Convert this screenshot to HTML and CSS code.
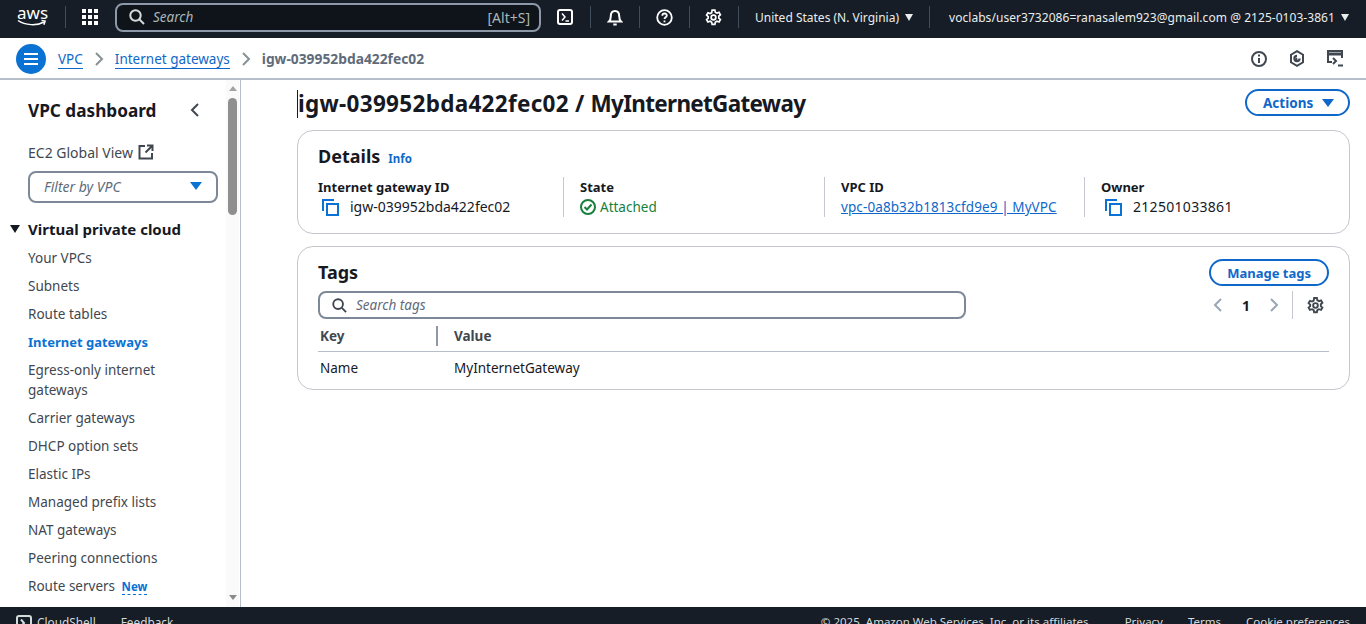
FILE: index.html
```html
<!DOCTYPE html>
<html lang="en">
<head>
  <meta charset="UTF-8">
  <meta name="viewport" content="width=device-width, initial-scale=1.0">
  <title>igw-039952bda422fec02 | VPC Console</title>
  <link rel="stylesheet" href="styles.css">
</head>
<body>
  <header class="topbar">
    <div class="aws-logo">
      <span class="aws-word">aws</span>
      <svg class="aws-smile" width="30" height="8" viewBox="0 0 30 8"><path d="M1 1.500C8 6.500 20 7 27 3M24.500 1.600l3.600.6-1.200 3.500" fill="none" stroke="#fff" stroke-width="1.500"/></svg>
    </div>
    <span class="top-sep"></span>
    <svg class="grid-icon" width="16" height="16" viewBox="0 0 16 16" fill="#fff"><rect x="0" y="0" width="4" height="4"/><rect x="6" y="0" width="4" height="4"/><rect x="12" y="0" width="4" height="4"/><rect x="0" y="6" width="4" height="4"/><rect x="6" y="6" width="4" height="4"/><rect x="12" y="6" width="4" height="4"/><rect x="0" y="12" width="4" height="4"/><rect x="6" y="12" width="4" height="4"/><rect x="12" y="12" width="4" height="4"/></svg>
    <div class="top-search">
      <svg width="16" height="16" viewBox="0 0 16 16" fill="none" stroke="#d5dbdb" stroke-width="2"><circle cx="6.500" cy="6.500" r="5.200"/><path d="M10.500 10.500L15 15"/></svg>
      <span class="top-search-text">Search</span>
      <span class="top-search-key">[Alt+S]</span>
    </div>
    <div class="top-icon">
      <svg width="16" height="16" viewBox="0 0 16 16" fill="none" stroke="#fff" stroke-width="2"><rect x="1" y="1" width="14" height="14" rx="2"/><path d="M5 4.500L8 8l-3 3.500M8.500 12H12" stroke-width="1.500"/></svg>
    </div>
    <div class="top-icon">
      <svg width="16" height="17" viewBox="0 0 16 17" fill="none" stroke="#fff" stroke-width="2"><path d="M2 12.500c1.500-1.500 1.800-3 1.800-5.500C3.800 4 5.500 2 8 2s4.200 2 4.200 5c0 2.500.3 4 1.800 5.500z"/><path d="M6.300 15.500h3.400"/></svg>
    </div>
    <div class="top-icon">
      <svg width="17" height="17" viewBox="0 0 17 17" fill="none" stroke="#fff" stroke-width="1.800"><circle cx="8.500" cy="8.500" r="7.300"/><path d="M6.300 6.800c0-3 4.500-3 4.500-.3 0 1.800-2.300 1.800-2.300 3.600"/><path d="M8.500 11.500v1.800"/></svg>
    </div>
    <div class="top-icon">
      <svg width="17" height="17" viewBox="0 0 16 16" fill="none" stroke="#fff" stroke-width="1.600"><path d="M6.700 1h2.600l.4 2 1.500.9 2-.7 1.300 2.200-1.500 1.400v1.800l1.500 1.400-1.300 2.200-2-.7-1.500.9-.4 2H6.700l-.4-2-1.500-.9-2 .7-1.300-2.200 1.500-1.400V7.200L1.500 5.800l1.300-2.200 2 .7 1.500-.9z"/><circle cx="8" cy="8" r="2.200"/></svg>
    </div>
    <div class="top-menu region">United States (N. Virginia)<span class="mini-caret"></span></div>
    <div class="top-menu account">voclabs/user3732086=ranasalem923@gmail.com @ 2125-0103-3861<span class="mini-caret"></span></div>
  </header>

  <nav class="crumbs">
    <button class="menu-btn" aria-label="Menu">
      <svg width="14" height="12" viewBox="0 0 14 12" stroke="#fff" stroke-width="2"><path d="M0 1h14M0 6h14M0 11h14"/></svg>
    </button>
    <a class="crumb" href="#">VPC</a>
    <svg class="crumb-arrow" width="9" height="14" viewBox="0 0 9 14" fill="none" stroke="#879196" stroke-width="2"><path d="M1 1l6 6-6 6"/></svg>
    <a class="crumb" href="#">Internet gateways</a>
    <svg class="crumb-arrow" width="9" height="14" viewBox="0 0 9 14" fill="none" stroke="#879196" stroke-width="2"><path d="M1 1l6 6-6 6"/></svg>
    <span class="crumb-current">igw-039952bda422fec02</span>
    <div class="crumb-tools">
      <svg width="16" height="16" viewBox="0 0 16 16" fill="none" stroke="#414750" stroke-width="2"><circle cx="8" cy="8" r="7"/><path d="M8 7v5M8 3.500v2"/></svg>
      <svg width="16" height="17" viewBox="0 0 16 17" fill="none" stroke="#414750" stroke-width="2"><path d="M8 1.200l6 3.500v7.600l-6 3.500-6-3.500V4.700z"/><path d="M10.600 8.500A2.600 2.600 0 1 1 8 5.900" stroke-width="2.200"/><path d="M6.500 8.500L8 10" stroke-width="2.500"/></svg>
      <svg width="17" height="17" viewBox="0 0 17 17" fill="none" stroke="#414750" stroke-width="2"><path d="M5 12H1V1h14v7"/><path d="M1 4h14" stroke-width="3"/><path d="M6 8l3 3-3 3M11 15.500h5"/></svg>
    </div>
  </nav>

  <div class="page">
    <aside class="sidebar">
      <div class="side-scroll">
        <div class="side-head">
          <h2>VPC dashboard</h2>
          <svg width="10" height="14" viewBox="0 0 10 14" fill="none" stroke="#414750" stroke-width="2"><path d="M8 1L2 7l6 6"/></svg>
        </div>
        <div class="side-global">EC2 Global View
          <svg width="16" height="16" viewBox="0 0 16 16" fill="none" stroke="#414750" stroke-width="2"><path d="M7 2H1.500v12.500H14V9"/><path d="M9 1.500h5.500V7M14 2L7.500 8.500"/></svg>
        </div>
        <div class="side-filter">
          <span>Filter by VPC</span>
          <span class="filter-caret"></span>
        </div>
        <div class="side-section"><span class="section-caret"></span>Virtual private cloud</div>
        <ul class="side-list">
          <li>Your VPCs</li>
          <li>Subnets</li>
          <li>Route tables</li>
          <li class="active">Internet gateways</li>
          <li class="two-line">Egress-only internet gateways</li>
          <li>Carrier gateways</li>
          <li>DHCP option sets</li>
          <li>Elastic IPs</li>
          <li>Managed prefix lists</li>
          <li>NAT gateways</li>
          <li>Peering connections</li>
          <li>Route servers <span class="badge-new">New</span></li>
        </ul>
      </div>
      <div class="scroll-track">
        <span class="scroll-up"></span>
        <span class="scroll-thumb"></span>
        <span class="scroll-down"></span>
      </div>
    </aside>

    <main class="content">
      <div class="title-row">
        <h1 class="page-title"><span class="title-id">igw-039952bda422fec02 /</span> <span class="title-name">MyInternetGateway</span></h1>
        <button class="btn btn-actions">Actions<span class="blue-caret"></span></button>
      </div>

      <section class="card details">
        <div class="card-title-row">
          <h2>Details</h2>
          <a class="info-link" href="#">Info</a>
        </div>
        <div class="kv-grid">
          <div class="kv">
            <div class="kv-label">Internet gateway ID</div>
            <div class="kv-value copy">
              <svg width="17" height="17" viewBox="0 0 17 17" fill="none" stroke="#0972d3" stroke-width="2"><path d="M1 12V1h11"/><rect x="5" y="5" width="11" height="11"/></svg>
              igw-039952bda422fec02
            </div>
          </div>
          <div class="kv">
            <div class="kv-label">State</div>
            <div class="kv-value state">
              <svg width="16" height="16" viewBox="0 0 16 16" fill="none" stroke="#17803d" stroke-width="2"><circle cx="8" cy="8" r="7"/><path d="M4.500 8l2.500 2.500 4.500-5"/></svg>
              Attached
            </div>
          </div>
          <div class="kv">
            <div class="kv-label">VPC ID</div>
            <div class="kv-value"><a class="vpc-link" href="#">vpc-0a8b32b1813cfd9e9 | MyVPC</a></div>
          </div>
          <div class="kv">
            <div class="kv-label">Owner</div>
            <div class="kv-value copy owner-id">
              <svg width="17" height="17" viewBox="0 0 17 17" fill="none" stroke="#0972d3" stroke-width="2"><path d="M1 12V1h11"/><rect x="5" y="5" width="11" height="11"/></svg>
              212501033861
            </div>
          </div>
        </div>
      </section>

      <section class="card tags">
        <div class="tags-head">
          <h2>Tags</h2>
          <button class="btn btn-manage">Manage tags</button>
        </div>
        <div class="tags-tools">
          <div class="tag-search">
            <svg width="15" height="15" viewBox="0 0 16 16" fill="none" stroke="#414750" stroke-width="2"><circle cx="6.500" cy="6.500" r="5.200"/><path d="M10.500 10.500L15 15"/></svg>
            <span>Search tags</span>
          </div>
          <div class="pager">
            <svg width="10" height="14" viewBox="0 0 10 14" fill="none" stroke="#9ba7b6" stroke-width="2"><path d="M8 1L2 7l6 6"/></svg>
            <span class="pager-num">1</span>
            <svg width="10" height="14" viewBox="0 0 10 14" fill="none" stroke="#9ba7b6" stroke-width="2"><path d="M2 1l6 6-6 6"/></svg>
            <span class="pager-sep"></span>
            <svg width="17" height="17" viewBox="0 0 16 16" fill="none" stroke="#414750" stroke-width="1.800"><path d="M6.700 1h2.600l.4 2 1.500.9 2-.7 1.300 2.200-1.500 1.400v1.800l1.500 1.400-1.300 2.200-2-.7-1.500.9-.4 2H6.700l-.4-2-1.500-.9-2 .7-1.300-2.200 1.500-1.400V7.200L1.500 5.800l1.300-2.200 2 .7 1.500-.9z"/><circle cx="8" cy="8" r="2.200"/></svg>
          </div>
        </div>
        <div class="tag-table">
          <div class="tag-row tag-row-head">
            <span class="cell-key">Key</span>
            <span class="cell-value">Value</span>
          </div>
          <div class="tag-row">
            <span class="cell-key">Name</span>
            <span class="cell-value">MyInternetGateway</span>
          </div>
        </div>
      </section>
    </main>
  </div>

  <footer class="footer">
    <svg width="16" height="16" viewBox="0 0 16 16" fill="none" stroke="#d5dbdb" stroke-width="2"><rect x="1" y="1" width="14" height="14" rx="2"/><path d="M5 4.500L8 8l-3 3.500"/></svg>
    <span class="foot-left">CloudShell</span>
    <span class="foot-left feedback">Feedback</span>
    <span class="foot-copy">© 2025, Amazon Web Services, Inc. or its affiliates.</span>
    <span class="foot-link privacy">Privacy</span>
    <span class="foot-link terms">Terms</span>
    <span class="foot-link">Cookie preferences</span>
  </footer>
</body>
</html>
```

FILE: styles.css
```css
* {
  box-sizing: border-box;
}

html, body {
  height: 100%;
}

body {
  margin: 0;
  height: 624px;
  overflow: hidden;
  display: flex;
  flex-direction: column;
  font-family: "Noto Sans", "Open Sans", sans-serif;
  font-size: 14px;
  color: #16191f;
  background-color: #fff;
}

a {
  color: #0f68c9;
}

h1, h2 {
  margin: 0;
}

button {
  font-family: inherit;
}

/* top bar */
.topbar {
  height: 38px;
  flex: none;
  display: flex;
  align-items: center;
  padding-bottom: 4px;
  background-color: #161d26;
  color: #eaeded;
  font-size: 12px;
}

.aws-logo {
  width: 65px;
  padding-left: 17px;
  display: flex;
  flex-direction: column;
  height: 26px;
}

.aws-word {
  font-size: 17px;
  line-height: 17px;
  color: #fff;
}

.aws-smile {
  margin-top: -2px;
}

.top-sep {
  width: 1px;
  height: 22px;
  background-color: #414d5c;
}

.grid-icon {
  margin-left: 16px;
}

.top-search {
  width: 426px;
  height: 29px;
  margin-left: 17px;
  padding: 0 9px 0 12px;
  display: flex;
  align-items: center;
  border: 2px solid #8d99a8;
  border-radius: 8px;
  background-color: #0f141a;
}

.top-search-text {
  margin-left: 8px;
  font-size: 13.500px;
  font-style: italic;
  color: #aab7b8;
}

.top-search-key {
  margin-left: auto;
  font-size: 14px;
  color: #aab7b8;
}

.top-icon {
  width: 49.500px;
  height: 22px;
  display: flex;
  align-items: center;
  justify-content: center;
  border-right: 1px solid #414d5c;
}

.top-menu {
  height: 22px;
  display: flex;
  align-items: center;
  white-space: nowrap;
}

.region {
  width: 191px;
  padding-left: 16px;
  border-right: 1px solid #414d5c;
}

.account {
  padding-left: 19px;
  letter-spacing: 0.05px;
}

.mini-caret {
  display: inline-block;
  margin-left: 6px;
  border-top: 7px solid #eaeded;
  border-left: 4px solid transparent;
  border-right: 4px solid transparent;
}

/* breadcrumb bar */
.crumbs {
  height: 42px;
  flex: none;
  display: flex;
  align-items: center;
  padding: 1px 22px 0 16px;
  background-color: #fff;
  border-bottom: 2px solid #b6bec9;
}

.menu-btn {
  width: 30px;
  height: 30px;
  margin-right: 12px;
  padding: 0;
  display: flex;
  align-items: center;
  justify-content: center;
  border: none;
  border-radius: 50%;
  background-color: #0972d3;
}

.crumb {
  margin-top: 1px;
  text-decoration: none;
  border-bottom: 1px solid #0f68c9;
  line-height: 18px;
  font-size: 13.500px;
}

.crumb-arrow {
  margin: 0 11px 0 12px;
}

.crumb-current {
  font-weight: 700;
  color: #5f6b7a;
  font-size: 13.800px;
}

.crumb-tools {
  margin-left: auto;
  display: flex;
  align-items: center;
  gap: 22px;
}

/* page */
.page {
  flex: 1;
  min-height: 0;
  display: flex;
}

.sidebar {
  width: 241px;
  flex: none;
  display: flex;
  border-right: 1px solid #b6bec9;
}

.side-scroll {
  flex: 1;
  min-width: 0;
  overflow: hidden;
  padding-left: 28px;
}

.side-head {
  height: 61px;
  padding: 18px 26px 0 0;
  display: flex;
  align-items: flex-start;
  justify-content: space-between;
}

.side-head h2 {
  font-size: 17.200px;
  line-height: 26px;
}

.side-head svg {
  margin-top: 5px;
}

.side-global {
  height: 22px;
  display: flex;
  align-items: center;
  gap: 5px;
  color: #414750;
}

.side-filter {
  width: 190px;
  height: 32px;
  margin-top: 8px;
  padding: 0 14px 2px;
  display: flex;
  align-items: center;
  justify-content: space-between;
  border: 2px solid #7d8998;
  border-radius: 8px;
  font-style: italic;
  color: #5f6b7a;
}

.filter-caret {
  border-top: 8px solid #0972d3;
  border-left: 6px solid transparent;
  border-right: 6px solid transparent;
}

.side-section {
  position: relative;
  margin-top: 14px;
  height: 24px;
  font-size: 15px;
  font-weight: 700;
  line-height: 24px;
}

.section-caret {
  position: absolute;
  left: -18px;
  top: 8px;
  border-top: 8px solid #16191f;
  border-left: 5px solid transparent;
  border-right: 5px solid transparent;
}

.side-list {
  list-style: none;
  margin: 3px 0 0;
  padding: 0;
  color: #414750;
  font-size: 13.500px;
}

.side-list li {
  min-height: 28px;
  padding: 4px 0;
  line-height: 20px;
  white-space: nowrap;
}

.side-list li.two-line {
  min-height: 48px;
  white-space: normal;
  width: 150px;
}

.side-list li.active {
  color: #0972d3;
  font-weight: 700;
  font-size: 13px;
}

.badge-new {
  margin-left: 3px;
  font-size: 11.500px;
  font-weight: 700;
  color: #0972d3;
  border-bottom: 1px dashed #0972d3;
}

.scroll-track {
  width: 13px;
  margin-right: 1px;
  padding-top: 15px;
  display: flex;
  flex-direction: column;
  align-items: center;
  background-color: #fafafa;
  position: relative;
}

.scroll-thumb {
  width: 9px;
  height: 117px;
  margin-top: 3px;
  border-radius: 5px;
  background-color: #8f8f8f;
}

.scroll-up {
  position: absolute;
  top: 6px;
  border-bottom: 5px solid #a3a3a3;
  border-left: 4px solid transparent;
  border-right: 4px solid transparent;
}

.scroll-down {
  position: absolute;
  bottom: 7px;
  border-top: 5px solid #8a8a8a;
  border-left: 4px solid transparent;
  border-right: 4px solid transparent;
}

/* main content */
.content {
  flex: 1;
  min-width: 0;
  padding: 10px 16px 0 56px;
}

.title-row {
  height: 40px;
  display: flex;
  align-items: flex-start;
  justify-content: space-between;
}

.page-title {
  height: 28px;
  border-left: 1px solid #16191f;
  font-size: 22.500px;
  line-height: 27px;
  white-space: nowrap;
}

.title-id {
  letter-spacing: 0.3px;
}

.title-name {
  letter-spacing: -0.7px;
}

.btn {
  height: 27px;
  padding: 0 16px;
  display: inline-flex;
  align-items: center;
  border: 2px solid #0f68c9;
  border-radius: 14px;
  background-color: #fff;
  color: #0f68c9;
  font-weight: 700;
  white-space: nowrap;
}

.btn-actions {
  width: 105px;
  margin-top: -1px;
  font-size: 13.500px;
}

.blue-caret {
  margin-left: 9px;
  border-top: 8px solid #0f68c9;
  border-left: 6px solid transparent;
  border-right: 6px solid transparent;
}

.card {
  border: 1px solid #c6c6cd;
  border-radius: 16px;
  background-color: #fff;
  padding: 0 20px;
}

.details {
  height: 104px;
  margin-bottom: 12px;
}

.card-title-row {
  height: 44px;
  padding-top: 6px;
  display: flex;
  align-items: center;
  gap: 8px;
}

.card-title-row h2, .tags-head h2 {
  font-size: 18px;
  line-height: 26px;
}

.info-link {
  margin-top: 4px;
  font-size: 11.500px;
  font-weight: 700;
  text-decoration: none;
}

.kv-grid {
  display: grid;
  grid-template-columns: 245px 261px 260px 1fr;
  margin-top: 2px;
}

.kv {
  height: 40px;
  padding-left: 16px;
  border-left: 1px solid #c6c6cd;
  white-space: nowrap;
}

.kv:first-child {
  padding-left: 0;
  border-left: none;
}

.kv-label {
  height: 20px;
  line-height: 20px;
  font-size: 13px;
  font-weight: 700;
}

.kv-value {
  height: 20px;
  display: flex;
  align-items: center;
  line-height: 20px;
}

.copy {
  gap: 11px;
  padding-left: 4px;
}

.owner-id {
  letter-spacing: 0.3px;
}

.state {
  gap: 4px;
  color: #17803d;
  font-size: 13.500px;
}

.vpc-link {
  font-size: 13.500px;
  letter-spacing: 0.1px;
}

.tags {
  height: 144px;
}

.tags-head {
  height: 44px;
  padding-top: 12px;
  display: flex;
  align-items: flex-start;
  justify-content: space-between;
}

.btn-manage {
  font-size: 13px;
}

.tags-tools {
  display: flex;
  align-items: center;
  justify-content: space-between;
}

.tag-search {
  width: 648px;
  height: 28px;
  padding: 0 12px;
  display: flex;
  align-items: center;
  gap: 9px;
  border: 2px solid #7d8998;
  border-radius: 8px;
  font-size: 13.500px;
  font-style: italic;
  color: #5f6b7a;
}

.pager {
  height: 28px;
  margin-right: 5px;
  display: flex;
  align-items: center;
}

.pager-num {
  width: 46px;
  text-align: center;
  font-weight: 700;
}

.pager-sep {
  width: 1px;
  height: 28px;
  margin: 0 14px 0 13px;
  background-color: #c6c6cd;
}

.tag-table {
  margin-top: 2px;
}

.tag-row {
  height: 32px;
  display: flex;
  align-items: center;
  padding-left: 2px;
  color: #16191f;
  font-size: 13.500px;
}

.tag-row-head {
  height: 31px;
  border-bottom: 1px solid #b6bec9;
  font-weight: 700;
  color: #414750;
}

.cell-key {
  width: 134px;
}

.tag-row-head .cell-key {
  position: relative;
}

.tag-row-head .cell-key::after {
  content: "";
  position: absolute;
  right: 16px;
  top: -1px;
  width: 2px;
  height: 20px;
  background-color: #8d99a8;
}

/* footer, cut off by the window */
.footer {
  height: 17px;
  flex: none;
  overflow: hidden;
  display: flex;
  align-items: flex-start;
  padding: 7px 16px 0;
  background-color: #161d26;
  color: #d5dbdb;
  font-size: 11.500px;
  line-height: 16px;
  white-space: nowrap;
}

.footer svg {
  flex: none;
  margin: 1px 5px 0 0;
}

.foot-left {
  font-size: 11.800px;
}

.feedback {
  margin-left: 25px;
}

.foot-copy {
  margin-left: auto;
  margin-right: 33px;
}

.privacy {
  margin-right: 25px;
}

.terms {
  margin-right: 25px;
}
```
